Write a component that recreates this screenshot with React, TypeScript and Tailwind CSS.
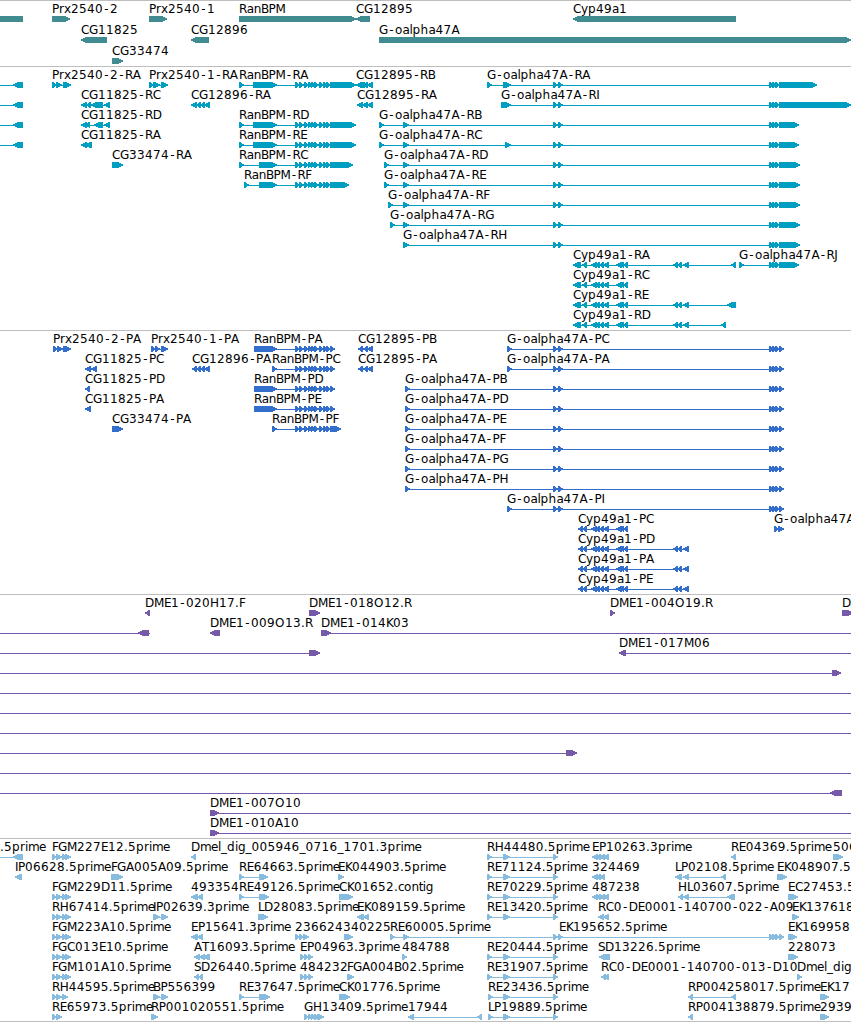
type Span = [number, number];

interface Feature {
  label?: string;
  x: number;
  dir: 1 | -1;
  spans: Span[];
  line?: Span;
}

interface TrackData {
  name: string;
  color: string;
  pitch: number;
  height: number;
  rows: Feature[][];
}

const WIDTH = 851;

const ADVANCE: Record<string, number> = {
  A: 8, B: 7.5, C: 8, D: 9, E: 7, F: 6, G: 9, H: 9, I: 3, J: 4, K: 7, L: 6, M: 10,
  O: 10, P: 7, R: 7.8, S: 7, T: 7, a: 7, c: 6, e: 7, g: 7.5, i: 3, l: 3, m: 11,
  n: 7.2, o: 7.5, r: 5, t: 4, x: 7, y: 7, ".": 4, "-": 7, _: 6,
};

const fwd = (label: string, x: number, spans: Span[], line?: Span): Feature => ({ label, x, dir: 1, spans, line });
const rev = (label: string, x: number, spans: Span[], line?: Span): Feature => ({ label, x, dir: -1, spans, line });

const ranSmall: Span[] = [[295, 300], [299, 304], [304, 309], [308, 312], [311, 315], [314, 319], [319, 324], [323, 328], [326, 331]];
const goPair: Span[] = [[553, 558], [558, 563]];
const goTriple: Span[] = [[769, 774], [772, 777], [775, 780]];
const goTail = (end: number): Span[] => [...goPair, ...goTriple, [779, end]];
const cypCore: Span[] = [[591, 597], [595, 600], [599, 604], [603, 609], [616, 622], [620, 624], [623, 628]];
const cypFar: Span[] = [[673, 678], [677, 682], [683, 689]];
const cypR: Span[] = [[573, 581], [582, 587], ...cypCore];
const cypP: Span[] = [[578, 583], [582, 587], ...cypCore];
const edge = (): Feature => rev("", 0, [[13, 23]], [0, 23]);
const fullLine = (): Feature => fwd("", 0, [], [0, WIDTH]);

const genes: Feature[][] = [
  [
    rev("", 0, [[-20, 23]]),
    fwd("Prx2540-2", 52, [[52, 70]]),
    fwd("Prx2540-1", 149, [[149, 167]]),
    fwd("RanBPM", 239, [[239, 356]]),
    rev("CG12895", 356, [[356, 370]]),
    rev("Cyp49a1", 573, [[573, 736]]),
  ],
  [
    rev("CG11825", 81, [[81, 107]]),
    rev("CG12896", 191, [[191, 209]]),
    fwd("G-oalpha47A", 379, [[379, 851]]),
  ],
  [fwd("CG33474", 112, [[112, 123]])],
];

const transcripts: Feature[][] = [
  [
    edge(),
    fwd("Prx2540-2-RA", 52, [[52, 57], [56, 62], [63, 71]]),
    fwd("Prx2540-1-RA", 149, [[149, 154], [153, 160], [161, 168]]),
    fwd("RanBPM-RA", 239, [[239, 244], [253, 277], ...ranSmall, [330, 356]]),
    rev("CG12895-RB", 356, [[356, 365], [363, 368], [367, 373]]),
    fwd("G-oalpha47A-RA", 487, [[487, 492], [503, 511], ...goTail(817)]),
  ],
  [
    edge(),
    rev("CG11825-RC", 81, [[81, 87], [86, 91], [91, 103], [104, 110]]),
    rev("CG12896-RA", 191, [[191, 197], [196, 201], [200, 205], [204, 210]]),
    rev("CG12895-RA", 357, [[357, 363], [362, 368], [367, 373]]),
    fwd("G-oalpha47A-RI", 501, [[501, 511], ...goTail(851)]),
  ],
  [
    edge(),
    rev("CG11825-RD", 81, [[81, 87], [86, 90], [94, 103], [104, 110]]),
    fwd("RanBPM-RD", 239, [[239, 244], [253, 277], ...ranSmall, [330, 356]]),
    fwd("G-oalpha47A-RB", 379, [[379, 384], [403, 409], ...goTail(799)]),
  ],
  [
    edge(),
    rev("CG11825-RA", 81, [[81, 87], [85, 92]]),
    fwd("RanBPM-RE", 239, [[239, 244], [253, 277], ...ranSmall, [330, 356]]),
    fwd("G-oalpha47A-RC", 379, [[379, 384], [403, 409], [505, 511], ...goTail(799)]),
  ],
  [
    fwd("CG33474-RA", 112, [[112, 123]]),
    fwd("RanBPM-RC", 239, [[239, 244], [259, 277], ...ranSmall, [330, 353]]),
    fwd("G-oalpha47A-RD", 384, [[384, 389], [403, 409], ...goTail(800)]),
  ],
  [
    fwd("RanBPM-RF", 244, [[244, 249], [259, 277], ...ranSmall, [330, 349]]),
    fwd("G-oalpha47A-RE", 384, [[384, 389], [403, 409], ...goTail(800)]),
  ],
  [fwd("G-oalpha47A-RF", 388, [[388, 393], [403, 409], ...goTail(800)])],
  [fwd("G-oalpha47A-RG", 390, [[390, 395], [403, 409], ...goTail(800)])],
  [fwd("G-oalpha47A-RH", 403, [[403, 409], ...goTail(800)])],
  [
    rev("Cyp49a1-RA", 573, [...cypR, ...cypFar, [731, 736]]),
    fwd("G-oalpha47A-RJ", 739, [[739, 744], ...goTriple, [779, 799]]),
  ],
  [rev("Cyp49a1-RC", 573, cypR)],
  [rev("Cyp49a1-RE", 573, [...cypR, ...cypFar, [727, 736]])],
  [rev("Cyp49a1-RD", 573, [...cypR, ...cypFar, [721, 726]])],
];

const proteins: Feature[][] = [
  [
    fwd("Prx2540-2-PA", 53, [[53, 58], [57, 63], [63, 71]]),
    fwd("Prx2540-1-PA", 151, [[151, 156], [155, 160], [161, 168]]),
    fwd("RanBPM-PA", 254, [[254, 277], ...ranSmall, [330, 335]]),
    rev("CG12895-PB", 358, [[358, 363], [363, 368], [367, 373]]),
    fwd("G-oalpha47A-PC", 507, [[507, 512], ...goTail(784)]),
  ],
  [
    rev("CG11825-PC", 85, [[85, 91], [91, 97]]),
    rev("CG12896-PA", 192, [[192, 197], [196, 201], [200, 205], [204, 210]]),
    fwd("RanBPM-PC", 272, [[272, 277], ...ranSmall, [330, 335]]),
    rev("CG12895-PA", 358, [[358, 363], [363, 368], [367, 373]]),
    fwd("G-oalpha47A-PA", 507, [[507, 512], ...goTail(784)]),
  ],
  [
    rev("CG11825-PD", 85, [[85, 90]]),
    fwd("RanBPM-PD", 254, [[254, 277], ...ranSmall, [330, 335]]),
    fwd("G-oalpha47A-PB", 405, [[405, 410], ...goTail(784)]),
  ],
  [
    rev("CG11825-PA", 85, [[85, 91]]),
    fwd("RanBPM-PE", 254, [[254, 277], ...ranSmall, [330, 335]]),
    fwd("G-oalpha47A-PD", 405, [[405, 410], ...goTail(784)]),
  ],
  [
    fwd("CG33474-PA", 112, [[112, 123]]),
    fwd("RanBPM-PF", 272, [[272, 277], ...ranSmall, [330, 341]]),
    fwd("G-oalpha47A-PE", 405, [[405, 410], ...goTail(784)]),
  ],
  [fwd("G-oalpha47A-PF", 405, [[405, 410], ...goTail(784)])],
  [fwd("G-oalpha47A-PG", 405, [[405, 410], ...goTail(784)])],
  [fwd("G-oalpha47A-PH", 405, [[405, 410], ...goTail(784)])],
  [fwd("G-oalpha47A-PI", 507, [[507, 512], ...goTail(784)])],
  [
    rev("Cyp49a1-PC", 578, cypP),
    fwd("G-oalpha47A", 774, [[774, 779], [778, 784]]),
  ],
  [rev("Cyp49a1-PD", 578, [...cypP, ...cypFar])],
  [rev("Cyp49a1-PA", 578, [...cypP, ...cypFar])],
  [rev("Cyp49a1-PE", 578, [...cypP, ...cypFar])],
];

const clones: Feature[][] = [
  [
    rev("DME1-020H17.F", 145, [[145, 150]]),
    fwd("DME1-018O12.R", 309, [[309, 320]]),
    fwd("DME1-004O19.R", 610, [[610, 615]]),
    fwd("D", 842, [[842, 853]]),
  ],
  [
    rev("", 0, [[138, 149]], [0, 150]),
    rev("DME1-009O13.R", 210, [[210, 220]]),
    fwd("DME1-014K03", 321, [[321, 331]], [321, WIDTH]),
  ],
  [
    fwd("", 0, [[309, 320]], [0, 320]),
    rev("DME1-017M06", 619, [[619, 626]], [619, WIDTH]),
  ],
  [fwd("", 0, [[832, 841]], [0, 841])],
  [fullLine()],
  [fullLine()],
  [fullLine()],
  [fwd("", 0, [[566, 577]], [0, 577])],
  [fullLine()],
  [rev("", 0, [[830, 842]], [0, 842])],
  [fwd("DME1-007O10", 210, [[210, 219]], [210, WIDTH])],
  [fwd("DME1-010A10", 210, [[210, 219]], [210, WIDTH])],
];

const prx: Span[] = [[52, 57], [56, 62], [62, 67], [65, 71]];
const goEst = (x: number): Span[] => [[x, x + 5], [503, 510], [553, 558]];
const cypEst: Span[] = [[592, 598], [596, 601], [599, 605], [603, 609]];
const ranEst: Span[] = [[300, 305], [304, 309], [308, 313]];

const ests: Feature[][] = [
  [
    rev(".5prime", 0, [[13, 23]], [0, 22]),
    fwd("FGM227E12.5prime", 52, prx),
    rev("Dmel_dig_005946_0716_1701.3prime", 191, [[191, 196]]),
    fwd("RH44480.5prime", 487, goEst(487)),
    rev("EP10263.3prime", 592, cypEst),
    rev("RE04369.5prime", 731, [[731, 736]]),
    fwd("506", 833, [[833, 843]]),
  ],
  [
    rev("IP06628.5prime", 15, [[15, 22]]),
    fwd("FGA005A09.5prime", 111, [[111, 123]]),
    fwd("RE64663.5prime", 239, [[239, 244], [259, 268]]),
    fwd("EK044903.5prime", 338, [[338, 344]]),
    fwd("RE71124.5prime", 487, goEst(487)),
    rev("324469", 592, cypEst.slice(0, 3)),
    rev("LP02108.5prime", 675, [[675, 682], [683, 689], [721, 726]]),
    fwd("EK048907.5", 777, [[777, 787]]),
  ],
  [
    fwd("FGM229D11.5prime", 52, prx),
    rev("493354", 191, [[191, 198], [197, 203]]),
    fwd("RE49126.5prime", 239, [[239, 244], [259, 269]]),
    fwd("CK01652.contig", 339, [[339, 353]]),
    fwd("RE70229.5prime", 487, goEst(487)),
    rev("487238", 592, cypEst),
    rev("HL03607.5prime", 678, [[678, 683], [683, 689], [727, 735]]),
    fwd("EC27453.5", 788, [[788, 798]]),
  ],
  [
    fwd("RH67414.5prime", 52, prx),
    fwd("IP02639.3prime", 153, [[153, 160], [161, 168]]),
    fwd("LD28083.5prime", 258, [[258, 268]]),
    rev("EK089159.5prime", 357, [[357, 364], [363, 369]]),
    fwd("RE13420.5prime", 487, goEst(487)),
    rev("RC0-DE0001-140700-022-A09", 598, [[598, 604], [603, 609]]),
    fwd("EK137618", 792, [[792, 799]]),
  ],
  [
    fwd("FGM223A10.5prime", 52, prx),
    rev("EP15641.3prime", 191, [[191, 198], [197, 203]]),
    fwd("236624", 295, [[295, 300], [299, 304], [303, 309]]),
    fwd("340225", 343, [[344, 353]]),
    fwd("RE60005.5prime", 390, [[390, 395], [403, 409], ...goTail(784)]),
    fwd("EK195652.5prime", 559, []),
    fwd("EK169958", 788, [[788, 797]]),
  ],
  [
    fwd("FGC013E10.5prime", 52, prx),
    rev("AT16093.5prime", 194, [[194, 200], [199, 205], [203, 210]]),
    fwd("EP04963.3prime", 300, ranEst),
    fwd("484788", 402, [[402, 407]]),
    fwd("RE20444.5prime", 487, goEst(487)),
    rev("SD13226.5prime", 598, [[599, 610]]),
    fwd("228073", 788, [[788, 798]]),
  ],
  [
    fwd("FGM101A10.5prime", 52, prx),
    rev("SD26440.5prime", 194, [[194, 199], [198, 203]]),
    fwd("484232", 300, ranEst),
    fwd("FGA004B02.5prime", 347, [[347, 354]]),
    fwd("RE31907.5prime", 487, goEst(487)),
    rev("RC0-DE0001-140700-013-D10", 601, [[601, 606], [604, 609]]),
    fwd("Dmel_dig", 797, [[797, 802]]),
  ],
  [
    fwd("RH44595.5prime", 52, [[52, 57], [56, 62], [62, 68]]),
    fwd("BP556399", 153, [[153, 160], [161, 168]]),
    fwd("RE37647.5prime", 239, [[239, 244], [259, 270]]),
    fwd("CK01776.5prime", 339, [[339, 350]]),
    fwd("RE23436.5prime", 488, goEst(488)),
    rev("RP004258017.5prime", 688, [[688, 693], [731, 736]]),
    fwd("EK17", 820, [[820, 829]]),
  ],
  [
    fwd("RE65973.5prime", 52, [[52, 57], [56, 62]]),
    fwd("RP001020551.5prime", 151, [[151, 158]]),
    fwd("GH13409.5prime", 304, [[304, 309], [308, 312], [311, 315], [314, 319], [317, 324]]),
    rev("17944", 408, [[408, 414], [477, 482]]),
    fwd("LP19889.5prime", 488, goEst(488)),
    rev("RP004138879.5prime", 688, [[688, 693]]),
    fwd("2939", 820, [[820, 829]]),
  ],
];

const tracks: TrackData[] = [
  { name: "genes", color: "#408c91", pitch: 21, height: 65, rows: genes },
  { name: "transcripts", color: "#009fc1", pitch: 20, height: 263, rows: transcripts },
  { name: "proteins", color: "#336ecc", pitch: 20, height: 263, rows: proteins },
  { name: "clones", color: "#7659a8", pitch: 20, height: 243, rows: clones },
  { name: "ests", color: "#87bcdf", pitch: 20, height: 182, rows: ests },
];

function charPositions(label: string, x: number) {
  let cursor = x;
  return [...label]
    .map((ch) => {
      // the hyphen glyph is narrower than its slot
      const at = ch === "-" ? cursor + 1.3 : cursor;
      cursor += ADVANCE[ch] ?? 8;
      return at;
    })
    .join(" ");
}

function arrowPoints([a, b]: Span, dir: 1 | -1, y: number) {
  const head = Math.min(6, b - a);
  const tip = dir === 1 ? b : a;
  const neck = tip - dir * (head - 1);
  const mid = tip - dir * head * 0.4;
  const tail = dir === 1 ? a : b;
  return [
    [tail, y], [neck, y], [mid, y + 1.4], [tip, y + 2.4],
    [tip, y + 3.6], [mid, y + 4.6], [neck, y + 6], [tail, y + 6],
  ]
    .map((p) => p.join(","))
    .join(" ");
}

function FeatureGlyph({ feature, y }: { feature: Feature; y: number }) {
  const { label, x, dir, spans, line } = feature;
  const from = line ? line[0] : spans.length ? spans[0][0] : x;
  const to = line ? line[1] : spans.length ? spans[spans.length - 1][1] : x;
  return (
    <g>
      {to > from && <rect x={from} y={y + 18} width={to - from} height={1} />}
      {spans.map((span, i) => (
        <polygon key={i} points={arrowPoints(span, dir, y + 15)} shapeRendering="crispEdges" />
      ))}
      {label && (
        <text x={charPositions(label, x)} y={y + 12} className="fill-black">
          {label}
        </text>
      )}
    </g>
  );
}

function Track({ track }: { track: TrackData }) {
  return (
    <section className="border-t border-[#bebebe]">
      <svg
        width={WIDTH}
        height={track.height}
        fill={track.color}
        aria-label={track.name}
        className="block overflow-hidden font-['DejaVu_Sans',sans-serif] text-[12px]"
      >
        {track.rows.map((row, r) =>
          row.map((feature, i) => <FeatureGlyph key={`${r}-${i}`} feature={feature} y={r * track.pitch} />)
        )}
      </svg>
    </section>
  );
}

export default function App() {
  return (
    <main className="flex h-[1022px] w-[851px] flex-col overflow-hidden border-b border-[#bebebe] bg-white">
      {tracks.map((track) => (
        <Track key={track.name} track={track} />
      ))}
    </main>
  );
}
